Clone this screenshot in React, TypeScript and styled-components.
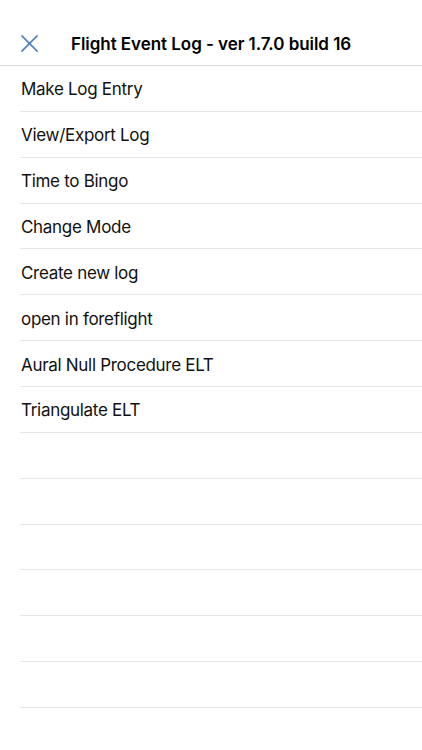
import styled, { createGlobalStyle } from 'styled-components';

const GlobalStyle = createGlobalStyle`
  html, body {
    margin: 0;
    padding: 0;
    background: #ffffff;
  }
  body {
    font-family: Inter, 'Noto Sans', sans-serif;
    -webkit-font-smoothing: antialiased;
  }
`;

const Screen = styled.div`
  width: 422px;
  height: 750px;
  overflow: hidden;
  background: #ffffff;
`;

const Header = styled.header`
  height: 66px;
  box-sizing: border-box;
  padding-top: 22px;
  display: flex;
  align-items: center;
  border-bottom: 1px solid #dcdcdf;
`;

const CloseButton = styled.button`
  width: 20px;
  height: 20px;
  margin-left: 19px;
  padding: 0;
  border: 0;
  background: none;
  display: flex;
  align-items: center;
  justify-content: center;

  svg {
    width: 19px;
    height: 19px;
    stroke: #4b7dbd;
    stroke-width: 1.6;
  }
`;

const Title = styled.h1`
  margin: 0 0 0 32px;
  font-size: 17px;
  font-weight: 600;
  letter-spacing: -0.05px;
  color: #000000;
`;

const List = styled.ul`
  list-style: none;
  margin: 0;
  padding: 0 0 0 20px;
`;

const Row = styled.li`
  height: 45.86px;
  box-sizing: border-box;
  display: flex;
  align-items: center;
  padding: 2px 0 0 1px;
  border-bottom: 1px solid #e6e6e8;
  font-size: 17px;
  letter-spacing: -0.3px;
  color: #111111;
`;

const items = [
  'Make Log Entry',
  'View/Export Log',
  'Time to Bingo',
  'Change Mode',
  'Create new log',
  'open in foreflight',
  'Aural Null Procedure ELT',
  'Triangulate ELT',
  '',
  '',
  '',
  '',
  '',
  '',
  '',
];

export default function App() {
  return (
    <>
      <GlobalStyle />
      <Screen>
        <Header>
          <CloseButton aria-label="Close">
            <svg viewBox="0 0 20 20" fill="none" strokeLinecap="round">
              <line x1="2" y1="2" x2="18" y2="18" />
              <line x1="18" y1="2" x2="2" y2="18" />
            </svg>
          </CloseButton>
          <Title>Flight Event Log - ver 1.7.0 build 16</Title>
        </Header>
        <List>
          {items.map((label, i) => (
            <Row key={i}>{label}</Row>
          ))}
        </List>
      </Screen>
    </>
  );
}
